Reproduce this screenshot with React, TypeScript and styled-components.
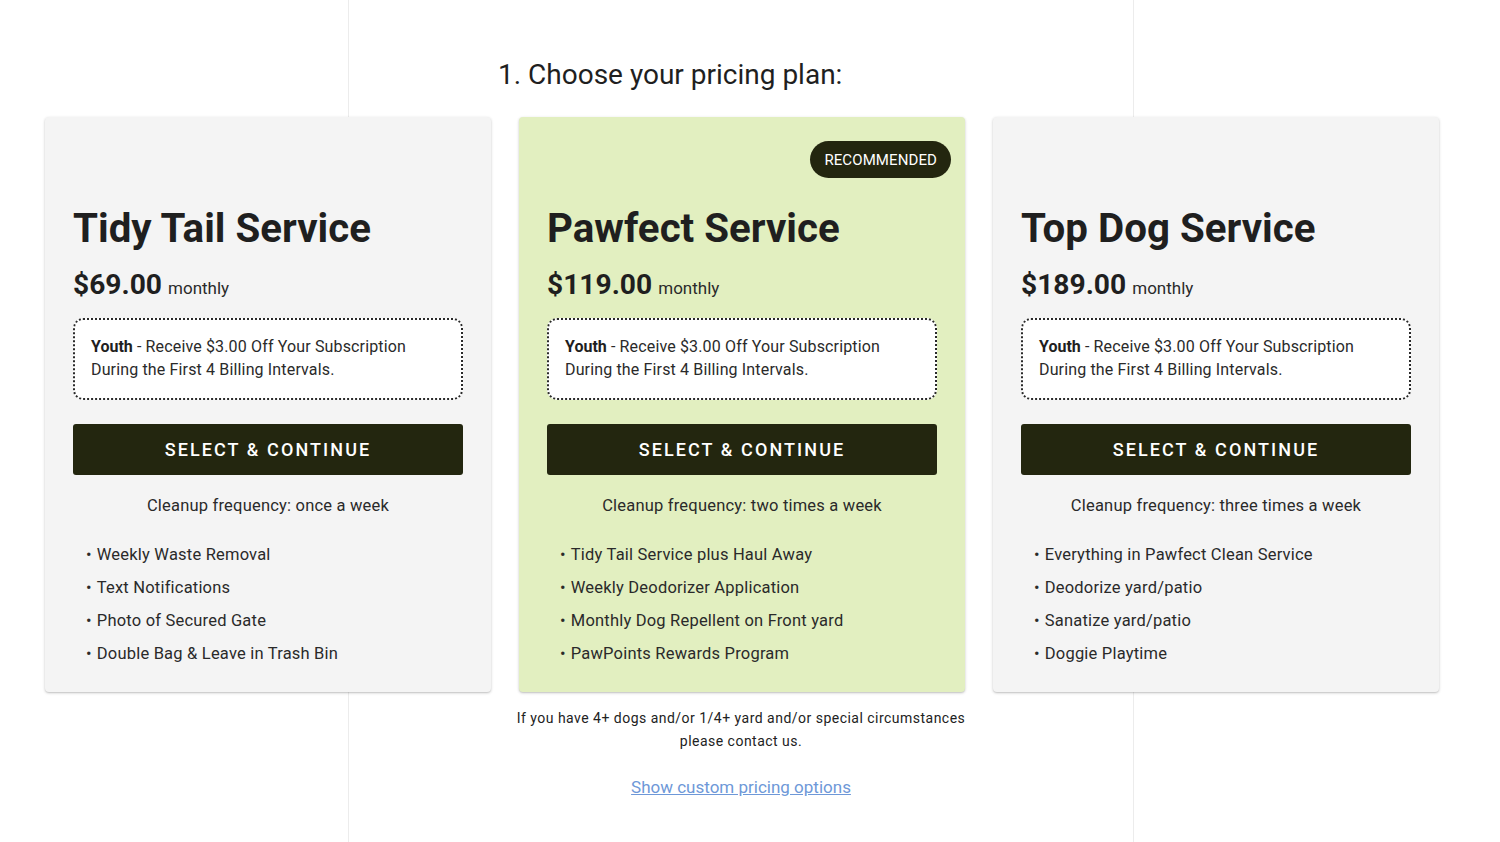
import React from "react";
import styled, { createGlobalStyle } from "styled-components";

const Global = createGlobalStyle`
  html, body { margin: 0; padding: 0; background: #ffffff; }
  body { font-family: Roboto, "Liberation Sans", Arial, sans-serif; color: #212121; }
  * { box-sizing: border-box; }
`;

const Page = styled.div`
  width: 1482px;
  min-height: 842px;
  display: flex;
  justify-content: center;
`;

const Shell = styled.main`
  width: 786px;
  min-height: 842px;
  border-left: 1px solid #ececec;
  border-right: 1px solid #ececec;
  display: flex;
  flex-direction: column;
  align-items: stretch;
  padding-top: 58px;
`;

const Heading = styled.h2`
  margin: 0 0 25px 149px;
  font-size: 28px;
  line-height: 34px;
  font-weight: 400;
  color: #1f1f1f;
`;

const CardRow = styled.div`
  display: flex;
  gap: 28px;
  margin: 0 -304px;
`;

const Card = styled.section<{ $featured?: boolean }>`
  position: relative;
  flex: 0 0 446px;
  background: ${(p) => (p.$featured ? "#e2efc0" : "#f4f4f4")};
  border-radius: 4px;
  box-shadow: 0 1px 3px rgba(0, 0, 0, 0.22), 0 1px 1px rgba(0, 0, 0, 0.06);
  padding: 88px 28px 22px;
  display: flex;
  flex-direction: column;
`;

const Badge = styled.span`
  position: absolute;
  top: 24px;
  right: 14px;
  height: 37px;
  padding: 0 14px;
  border-radius: 19px;
  background: #23260f;
  color: #ffffff;
  font-size: 15px;
  display: flex;
  align-items: center;
  letter-spacing: 0.1px;
`;

const Title = styled.h3`
  margin: 0;
  font-size: 40.3px;
  line-height: 48px;
  font-weight: 700;
  color: #1f1f1f;
`;

const PriceLine = styled.div`
  margin-top: 15px;
  display: flex;
  align-items: baseline;
  gap: 6px;
`;

const Price = styled.span`
  font-size: 28.2px;
  line-height: 34px;
  font-weight: 700;
  color: #1f1f1f;
`;

const Period = styled.span`
  font-size: 17px;
  color: #2a2a2a;
`;

const Promo = styled.div`
  margin-top: 16px;
  background: #ffffff;
  border: 2px dotted #2a2a2a;
  border-radius: 10px;
  padding: 15px 16px 17px;
  font-size: 16px;
  line-height: 23px;
  letter-spacing: 0.15px;
  color: #2a2a2a;
  b { font-weight: 700; color: #1f1f1f; letter-spacing: 0; }
`;

const SelectButton = styled.button`
  margin-top: 24px;
  height: 51px;
  width: 100%;
  border: none;
  border-radius: 3px;
  background: #23260f;
  color: #ffffff;
  font-family: Roboto, "Liberation Sans", Arial, sans-serif;
  font-size: 18px;
  font-weight: 500;
  letter-spacing: 2.1px;
  cursor: pointer;
`;

const Frequency = styled.p`
  margin: 19px 0 0;
  text-align: center;
  font-size: 16.5px;
  line-height: 24px;
  color: #2a2a2a;
  letter-spacing: 0.2px;
`;

const Features = styled.ul`
  list-style: none;
  margin: 20px 0 0;
  padding: 0 0 0 13px;
`;

const Feature = styled.li`
  font-size: 16.5px;
  line-height: 33px;
  color: #2a2a2a;
  letter-spacing: 0.2px;
  &::before {
    content: "•";
    margin-right: 5px;
  }
`;

const Note = styled.p`
  margin: 15px auto 0;
  max-width: 470px;
  text-align: center;
  font-size: 14px;
  line-height: 23px;
  letter-spacing: 0.48px;
  color: #222222;
`;

const CustomLink = styled.a`
  margin-top: 22px;
  align-self: center;
  font-size: 17px;
  line-height: 24px;
  color: #6e98d8;
  text-decoration: underline;
  letter-spacing: 0;
  cursor: pointer;
`;

type Plan = {
  name: string;
  price: string;
  frequency: string;
  features: string[];
  featured?: boolean;
};

const plans: Plan[] = [
  {
    name: "Tidy Tail Service",
    price: "$69.00",
    frequency: "once a week",
    features: [
      "Weekly Waste Removal",
      "Text Notifications",
      "Photo of Secured Gate",
      "Double Bag & Leave in Trash Bin",
    ],
  },
  {
    name: "Pawfect Service",
    price: "$119.00",
    frequency: "two times a week",
    featured: true,
    features: [
      "Tidy Tail Service plus Haul Away",
      "Weekly Deodorizer Application",
      "Monthly Dog Repellent on Front yard",
      "PawPoints Rewards Program",
    ],
  },
  {
    name: "Top Dog Service",
    price: "$189.00",
    frequency: "three times a week",
    features: [
      "Everything in Pawfect Clean Service",
      "Deodorize yard/patio",
      "Sanatize yard/patio",
      "Doggie Playtime",
    ],
  },
];

export default function App() {
  return (
    <>
      <Global />
      <Page>
        <Shell>
          <Heading>1. Choose your pricing plan:</Heading>
          <CardRow>
            {plans.map((plan) => (
              <Card key={plan.name} $featured={plan.featured}>
                {plan.featured && <Badge>RECOMMENDED</Badge>}
                <Title>{plan.name}</Title>
                <PriceLine>
                  <Price>{plan.price}</Price>
                  <Period>monthly</Period>
                </PriceLine>
                <Promo>
                  <b>Youth</b> - Receive $3.00 Off Your Subscription During the First 4 Billing Intervals.
                </Promo>
                <SelectButton>SELECT &amp; CONTINUE</SelectButton>
                <Frequency>Cleanup frequency: {plan.frequency}</Frequency>
                <Features>
                  {plan.features.map((f) => (
                    <Feature key={f}>{f}</Feature>
                  ))}
                </Features>
              </Card>
            ))}
          </CardRow>
          <Note>
            If you have 4+ dogs and/or 1/4+ yard and/or special circumstances please contact us.
          </Note>
          <CustomLink>Show custom pricing options</CustomLink>
        </Shell>
      </Page>
    </>
  );
}
